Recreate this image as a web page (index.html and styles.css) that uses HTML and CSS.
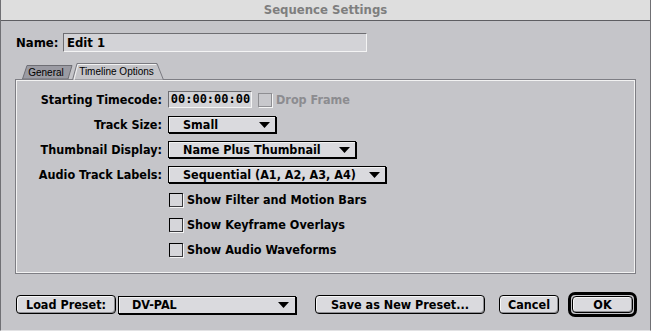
FILE: index.html
```html
<!DOCTYPE html>
<html>
<head>
<meta charset="utf-8">
<link rel="stylesheet" href="styles.css">
</head>
<body>
<div class="window">
  <div class="titlebar">Sequence Settings</div>
  <div class="name-row">
    <span class="label">Name:</span>
    <div class="field name-field">Edit 1</div>
  </div>
  <div class="tabs">
    <div class="tab tab-back">
      <svg class="tab-shape" viewBox="0 0 52 14" preserveAspectRatio="none"><polygon points="0.5,14 5,0.5 50,0.5 46,14" fill="#9b9ba3" stroke="#6e6e74" stroke-width="1"/></svg>
      <span class="tab-text">General</span>
    </div>
    <div class="tab tab-front">
      <svg class="tab-shape" viewBox="0 0 92 17" preserveAspectRatio="none"><polygon points="0.5,17 5,0.5 85,0.5 91.5,17" fill="#c5c5c9" stroke="#7a7a80" stroke-width="1"/><polyline points="2,17 6,1.5 84,1.5" fill="none" stroke="#f2f2f2" stroke-width="1"/></svg>
      <span class="tab-text">Timeline Options</span>
    </div>
  </div>
  <div class="panel">
    <div class="grid">
      <div class="row-label">Starting Timecode:</div>
      <div class="row-ctrl">
        <div class="field timecode">00:00:00:00</div>
        <span class="checkbox disabled"></span>
        <span class="check-text disabled-text">Drop Frame</span>
      </div>

      <div class="row-label">Track Size:</div>
      <div class="row-ctrl">
        <div class="popup w-track"><span class="popup-text">Small</span><svg class="arrow" viewBox="0 0 11 6"><polygon points="0,0 11,0 5.5,6" fill="#000"/></svg></div>
      </div>

      <div class="row-label">Thumbnail Display:</div>
      <div class="row-ctrl">
        <div class="popup w-thumb"><span class="popup-text">Name Plus Thumbnail</span><svg class="arrow" viewBox="0 0 11 6"><polygon points="0,0 11,0 5.5,6" fill="#000"/></svg></div>
      </div>

      <div class="row-label">Audio Track Labels:</div>
      <div class="row-ctrl">
        <div class="popup w-audio"><span class="popup-text">Sequential (A1, A2, A3, A4)</span><svg class="arrow" viewBox="0 0 11 6"><polygon points="0,0 11,0 5.5,6" fill="#000"/></svg></div>
      </div>

      <div class="row-ctrl col2">
        <span class="checkbox"></span><span class="check-text">Show Filter and Motion Bars</span>
      </div>
      <div class="row-ctrl col2">
        <span class="checkbox"></span><span class="check-text">Show Keyframe Overlays</span>
      </div>
      <div class="row-ctrl col2">
        <span class="checkbox"></span><span class="check-text">Show Audio Waveforms</span>
      </div>
    </div>
  </div>
  <div class="buttons">
    <div class="btn w-load">Load Preset:</div>
    <div class="popup w-preset"><span class="popup-text">DV-PAL</span><svg class="arrow" viewBox="0 0 11 6"><polygon points="0,0 11,0 5.5,6" fill="#000"/></svg></div>
    <div class="btn w-save">Save as New Preset...</div>
    <div class="btn w-cancel">Cancel</div>
    <div class="default-ring"><div class="btn w-ok">OK</div></div>
  </div>
</div>
</body>
</html>
```

FILE: styles.css
```css
* { box-sizing: border-box; }
html, body { margin: 0; padding: 0; }
body {
  width: 651px;
  height: 331px;
  background: #c5c5c9;
  font-family: "DejaVu Sans Condensed", "DejaVu Sans", sans-serif;
  font-weight: bold;
  font-size: 12px;
  color: #000;
  overflow: hidden;
}
.window {
  width: 651px;
  height: 331px;
  border-left: 1px solid #707074;
  border-right: 1px solid #707074;
  border-bottom: 1px solid #e2e2e4;
  background: #c5c5c9;
}
.titlebar {
  height: 21px;
  background: #dedede;
  border-bottom: 1px solid #5e5e62;
  color: #7e7e7e;
  font-size: 13px;
  text-align: center;
  line-height: 20px;
}
.name-row {
  display: flex;
  align-items: center;
  margin-top: 12px;
  padding-left: 15px;
  height: 19px;
}
.label { width: 47px; font-size: 13px; }
.field {
  background: #d3d3d7;
  border-top: 1px solid #6e6e72;
  border-left: 1px solid #6e6e72;
  border-bottom: 1px solid #f4f4f4;
  border-right: 1px solid #f4f4f4;
}
.name-field {
  width: 304px;
  height: 19px;
  padding-left: 3px;
  line-height: 17px;
  font-size: 13px;
}
.tabs {
  display: flex;
  align-items: flex-end;
  margin-top: 11px;
  padding-left: 21px;
  height: 16px;
}
.tab {
  position: relative;
  font-family: "Liberation Sans", Arial, sans-serif;
  font-weight: normal;
  font-size: 10px;
  display: flex;
  align-items: center;
  justify-content: center;
}
.tab-shape {
  position: absolute;
  left: 0; top: 0;
  width: 100%;
  height: 100%;
}
.tab-text { position: relative; }
.tab-back {
  width: 52px;
  height: 14px;
  padding-right: 4px;
  padding-top: 1px;
}
.tab-front {
  width: 92px;
  height: 17px;
  margin-left: -2px;
  margin-bottom: -1px;
  padding-right: 3px;
  z-index: 1;
}
.panel {
  margin-left: 14px;
  width: 621px;
  height: 195px;
  border: 1px solid #7e7e84;
  box-shadow: inset 1px 1px 0 #f2f2f2, inset -1px -1px 0 #f2f2f2;
  padding-top: 7px;
}
.grid {
  display: grid;
  grid-template-columns: 146px 1fr;
  column-gap: 6px;
  grid-auto-rows: 25px;
}
.row-label {
  display: flex;
  align-items: center;
  justify-content: flex-end;
  font-size: 12.5px;
}
.row-ctrl {
  display: flex;
  align-items: center;
}
.col2 { grid-column: 2; }
.timecode {
  width: 84px;
  height: 17px;
  font-family: "DejaVu Sans Mono", monospace;
  font-size: 12px;
  line-height: 15px;
  text-align: center;
  padding-left: 1px;
}
.checkbox {
  display: inline-block;
  width: 14px;
  height: 14px;
  background: #d6d6da;
  border-top: 1px solid #000;
  border-left: 1px solid #000;
  border-right: 1px solid #3a3a3e;
  border-bottom: 1px solid #3a3a3e;
  box-shadow: 1px 1px 0 #f4f4f4;
  margin-left: 1px;
}
.checkbox.disabled {
  margin-left: 6px;
  border-color: #8e8e92;
  background: #c8c8cc;
}
.check-text { margin-left: 4px; font-size: 12.5px; }
.disabled-text { color: #8c8c90; }
.popup {
  display: flex;
  align-items: center;
  justify-content: space-between;
  height: 17px;
  background: #dadade;
  border: 1px solid #000;
  box-shadow: 1px 1px 0 #000, inset 1px 1px 0 #f2f2f2;
  padding-left: 14px;
  padding-right: 5px;
  font-size: 12.5px;
}
.arrow { width: 11px; height: 6px; display: block; }
.w-track { width: 108px; }
.w-thumb { width: 188px; }
.w-audio { width: 218px; }
.buttons {
  display: flex;
  align-items: center;
  margin-top: 18px;
  padding-left: 15px;
  height: 25px;
}
.btn {
  height: 19px;
  border: 1px solid #000;
  border-radius: 4px;
  background: #dadade;
  box-shadow: inset 1px 1px 0 #f6f6f6, inset -1px -1px 0 #8e8e92;
  display: flex;
  align-items: center;
  justify-content: center;
  font-size: 12.5px;
}
.w-load { width: 100px; }
.w-preset { width: 178px; height: 18px; margin-left: 2px; padding-left: 13px; padding-right: 6px; }
.w-save { width: 170px; margin-left: 19px; }
.w-cancel { width: 60px; margin-left: 14px; }
.default-ring {
  margin-left: 9px;
  width: 69px;
  height: 25px;
  border: 3px solid #000;
  border-radius: 7px;
  padding: 1px;
  background: #c5c5c9;
}
.w-ok { width: 100%; height: 100%; }
```
